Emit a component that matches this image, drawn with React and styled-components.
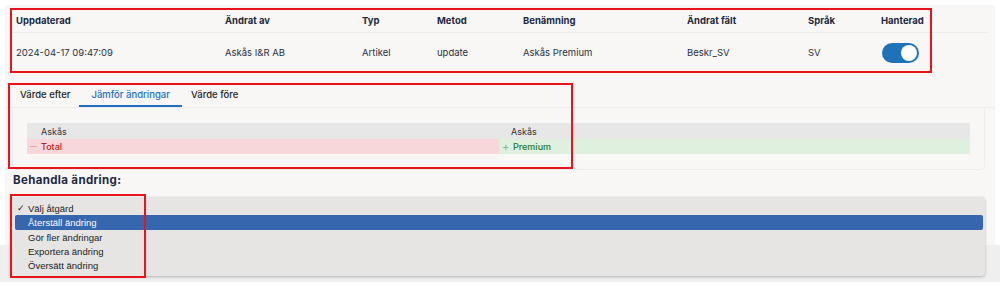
import React from 'react';
import styled, { createGlobalStyle } from 'styled-components';

const GlobalStyle = createGlobalStyle`
  html, body {
    margin: 0;
    padding: 0;
    background: #fff;
  }
  body {
    font-family: Inter, "Noto Sans", sans-serif;
    color: #222b3c;
  }
  * { box-sizing: border-box; }
`;

const Page = styled.div`
  position: relative;
  width: 1000px;
  height: 287px;
  padding: 5px 5px 0 5px;
`;

const Panel = styled.div`
  background: #f8f7f6;
  height: 277px;
  display: flex;
  flex-direction: column;
`;

const Table = styled.div`
  margin: 4px 0 0 5px;
  width: 977px;
`;

const Row = styled.div`
  display: grid;
  grid-template-columns: 209px 137px 75px 86px 164px 121px 73px 60px;
  align-items: center;
  padding-left: 6px;
  height: ${p => (p.head ? '24px' : '39px')};
  border-bottom: ${p => (p.head ? '1px solid #ebebea' : 'none')};
`;

const HeadCell = styled.div`
  font-size: 9.5px;
  font-weight: 700;
  color: #1d2940;
`;

const Cell = styled.div`
  font-size: 9.5px;
  color: #2a3142;
`;

const Toggle = styled.div`
  width: 37px;
  height: 20px;
  margin-left: 1px;
  border-radius: 10px;
  background: #1e72b8;
  position: relative;
  &::after {
    content: '';
    position: absolute;
    right: 2px;
    top: 2px;
    width: 16px;
    height: 16px;
    border-radius: 50%;
    background: #fff;
  }
`;

const TabBar = styled.div`
  margin-top: 11px;
  display: flex;
  height: 25px;
  padding-left: 6px;
  border-bottom: 1px solid #ededec;
`;

const Tab = styled.div`
  padding: 0 ${p => p.pad || 9}px;
  font-size: 9.5px;
  font-weight: 500;
  display: flex;
  align-items: center;
  color: ${p => (p.active ? '#1f6fc0' : '#222')};
  border-bottom: 2px solid ${p => (p.active ? '#1f6fc0' : 'transparent')};
`;

const DiffBox = styled.div`
  margin: 0 10px 0 7px;
  border: 1px solid #ececeb;
  border-top: none;
  border-radius: 0 0 5px 5px;
  padding: 15px 14px 15px 14px;
`;

const DiffGrid = styled.div`
  display: grid;
  grid-template-columns: 472px 1fr;
  font-size: 9px;
`;

const DiffHead = styled.div`
  background: #e7e7e7;
  height: 16px;
  display: flex;
  align-items: center;
  padding-left: ${p => p.pad}px;
  color: #333;
`;

const DiffCell = styled.div`
  height: 15px;
  display: flex;
  align-items: center;
  padding-left: 3px;
  font-weight: 500;
  background: ${p => (p.kind === 'del' ? '#f8d7da' : '#dff0df')};
  color: ${p => (p.kind === 'del' ? '#b11d2c' : '#1d7a33')};
`;

const Mark = styled.span`
  width: 11px;
  color: ${p => (p.kind === 'del' ? '#e58a93' : '#7cc484')};
  font-size: ${p => (p.kind === 'del' ? '7px' : '11px')};
`;

const Heading = styled.div`
  margin: 3px 0 0 8px;
  font-size: 11.5px;
  font-weight: 700;
  letter-spacing: 0.35px;
  line-height: 14px;
  color: #1d2940;
`;

const SelectWrap = styled.div`
  position: relative;
  margin-top: 10px;
  height: 48px;
`;

const Footer = styled.div`
  height: 37px;
  background: #efeff0;
  margin: 0 -5px;
`;

const Menu = styled.div`
  position: absolute;
  top: 0;
  left: 5px;
  width: 975px;
  height: 79px;
  background: #e6e5e3;
  border-radius: 4px;
  box-shadow: 0 1px 3px rgba(0, 0, 0, 0.25);
  padding-top: 4px;
  font-family: "Liberation Sans", Arial, sans-serif;
  font-size: 9.5px;
  color: #222;
  z-index: 2;
`;

const Option = styled.div`
  height: ${p => (p.selected ? '15px' : '14px')};
  margin: 0 2px 0 5px;
  display: flex;
  align-items: center;
  padding-left: ${p => (p.checked ? '2px' : '13px')};
  background: ${p => (p.selected ? '#3566ae' : 'transparent')};
  color: ${p => (p.selected ? '#fff' : '#222')};
  border-radius: 2px;
`;

const Check = styled.span`
  width: 11px;
  font-size: 9px;
`;

const Annotation = styled.div`
  position: absolute;
  border: 2px solid #e8131b;
  z-index: 5;
  pointer-events: none;
`;

const columns = ['Uppdaterad', 'Ändrat av', 'Typ', 'Metod', 'Benämning', 'Ändrat fält', 'Språk', 'Hanterad'];
const values = ['2024-04-17 09:47:09', 'Askås I&R AB', 'Artikel', 'update', 'Askås Premium', 'Beskr_SV', 'SV'];
const options = ['Återställ ändring', 'Gör fler ändringar', 'Exportera ändring', 'Översätt ändring'];

const App = () => {
  return (
    <>
      <GlobalStyle />
      <Page>
        <Panel>
          <Table>
            <Row head>
              {columns.map(c => <HeadCell key={c}>{c}</HeadCell>)}
            </Row>
            <Row>
              {values.map(v => <Cell key={v}>{v}</Cell>)}
              <Toggle />
            </Row>
          </Table>

          <TabBar>
            <Tab>Värde efter</Tab>
            <Tab active pad={12}>Jämför ändringar</Tab>
            <Tab>Värde före</Tab>
          </TabBar>

          <DiffBox>
            <DiffGrid>
              <DiffHead pad={14}>Askås</DiffHead>
              <DiffHead pad={12}>Askås</DiffHead>
              <DiffCell kind="del"><Mark kind="del">—</Mark>Total</DiffCell>
              <DiffCell kind="add"><Mark kind="add">+</Mark>Premium</DiffCell>
            </DiffGrid>
          </DiffBox>

          <Heading>Behandla ändring:</Heading>

          <SelectWrap>
            <Menu>
              <Option checked><Check>✓</Check>Välj åtgärd</Option>
              {options.map((o, i) => (
                <Option key={o} selected={i === 0}>{o}</Option>
              ))}
            </Menu>
          </SelectWrap>
          <Footer />
        </Panel>

        <Annotation style={{ left: 10, top: 8, width: 922, height: 65 }} />
        <Annotation style={{ left: 8, top: 83, width: 565, height: 86 }} />
        <Annotation style={{ left: 10, top: 194, width: 136, height: 84 }} />
      </Page>
    </>
  );
};

export default App;
